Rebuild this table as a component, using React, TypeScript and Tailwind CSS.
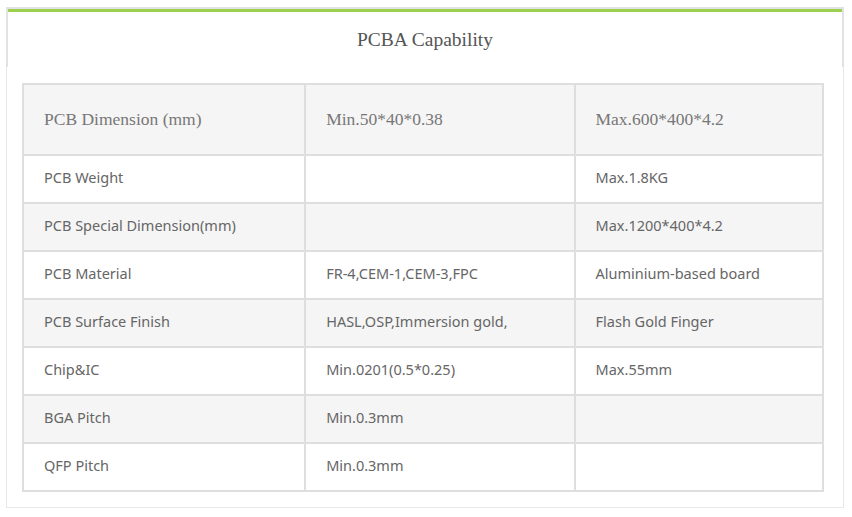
const rows: [string, string, string][] = [
  ["PCB Weight", "", "Max.1.8KG"],
  ["PCB Special Dimension(mm)", "", "Max.1200*400*4.2"],
  ["PCB Material", "FR-4,CEM-1,CEM-3,FPC", "Aluminium-based board"],
  ["PCB Surface Finish", "HASL,OSP,Immersion gold,", "Flash Gold Finger"],
  ["Chip&IC", "Min.0201(0.5*0.25)", "Max.55mm"],
  ["BGA Pitch", "Min.0.3mm", ""],
  ["QFP Pitch", "Min.0.3mm", ""],
]

export default function App() {
  return (
    <div className="w-[852px] h-[517px] bg-white pt-[7px] pl-[6px]">
      <div className="w-[838px]">
        {/* heading panel */}
        <div className="h-[60px] border-2 border-b-0 border-[#e2e2e2]">
          <div className="h-full border-t-[3px] border-[#9dcf50] flex items-center justify-center">
            <h2 className="text-[19.5px] text-[#555] font-['Liberation_Serif',serif]">PCBA Capability</h2>
          </div>
        </div>
        <div className="border border-t-0 border-[#e8e8e8] pl-[15px] pr-[19px] pt-[16px] pb-[15px]">
          <table className="w-[802px] border-collapse text-[#666] font-['Noto_Sans',sans-serif] text-[14.5px]">
            <colgroup>
              <col className="w-[283px]" />
              <col className="w-[270px]" />
              <col className="w-[249px]" />
            </colgroup>
            <tbody>
              <tr className="h-[71px] bg-[#f5f5f5] font-['Liberation_Serif',serif] text-[17.5px] text-[#777]">
                <td className="border-2 border-[#dedede] pl-[20px]">PCB Dimension (mm)</td>
                <td className="border-2 border-[#dedede] pl-[20px]">Min.50*40*0.38</td>
                <td className="border-2 border-[#dedede] pl-[20px]">Max.600*400*4.2</td>
              </tr>
              {rows.map((r, i) => (
                <tr key={i} className={i % 2 === 0 ? "h-[48px] bg-white" : "h-[48px] bg-[#f5f5f5]"}>
                  {r.map((c, j) => (
                    <td key={j} className="border-2 border-[#dedede] pl-[20px] pb-[2px]">{c}</td>
                  ))}
                </tr>
              ))}
            </tbody>
          </table>
        </div>
      </div>
    </div>
  )
}
